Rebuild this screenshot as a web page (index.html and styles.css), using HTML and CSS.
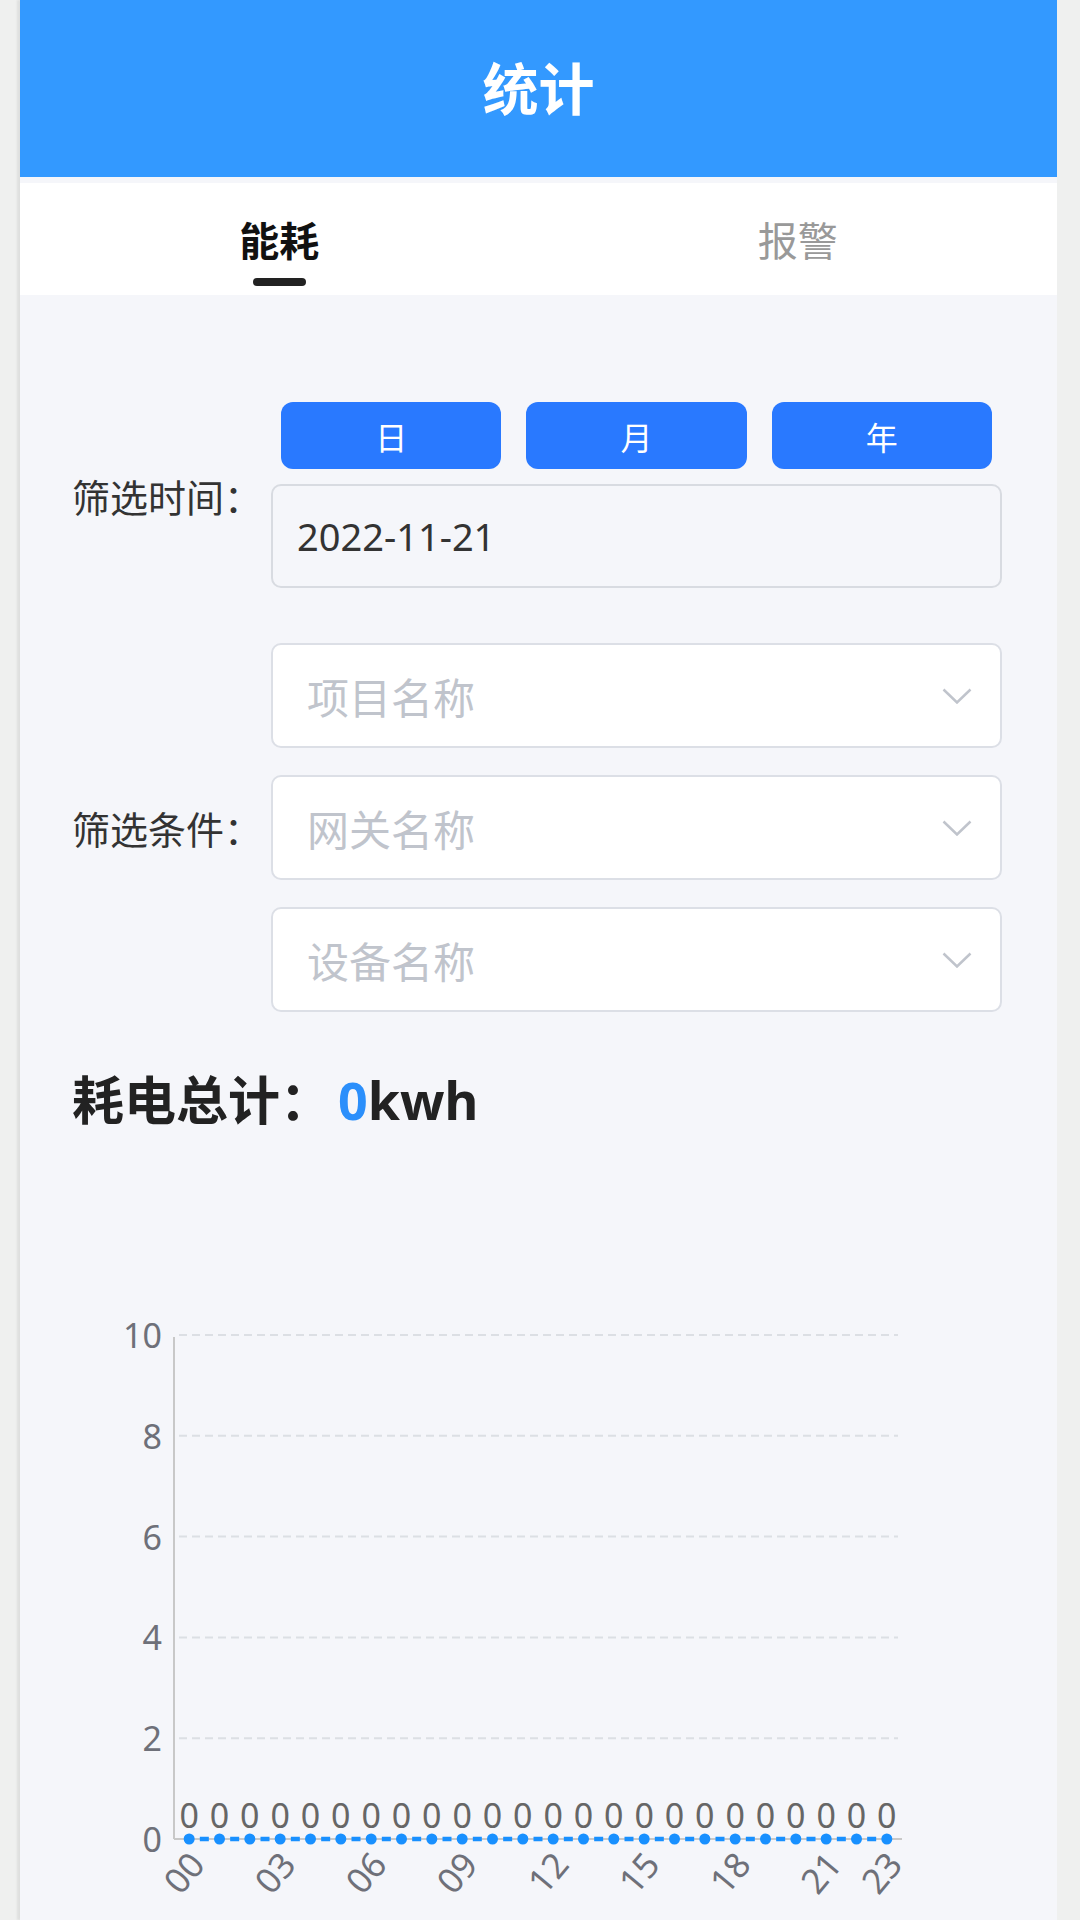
FILE: index.html
```html
<!DOCTYPE html>
<html lang="zh-CN">
<head>
    <meta charset="UTF-8">
    <meta name="viewport" content="width=device-width, initial-scale=1.0">
    <title>统计</title>
    <link rel="stylesheet" href="styles.css">
</head>
<body>
    <div class="app">
        <div class="header">统计</div>

        <div class="tabs">
            <div class="tab active">
                <span class="tab-text">能耗</span>
                <i class="tab-line"></i>
            </div>
            <div class="tab">
                <span class="tab-text">报警</span>
                <i class="tab-line"></i>
            </div>
        </div>

        <div class="main">
            <div class="form-row time-row">
                <div class="form-label">筛选时间：</div>
                <div class="form-body">
                    <div class="type-buttons">
                        <button class="type-btn">日</button>
                        <button class="type-btn">月</button>
                        <button class="type-btn">年</button>
                    </div>
                    <div class="date-input">2022-11-21</div>
                </div>
            </div>

            <div class="form-row filter-row">
                <div class="form-label">筛选条件：</div>
                <div class="form-body selects">
                    <div class="select">
                        <span class="placeholder">项目名称</span>
                        <svg class="arrow" width="30" height="16" viewBox="0 0 30 16"><path d="M1.5 1.5 L15 14.5 L28.5 1.5" fill="none" stroke="#c0c4cc" stroke-width="2.5"/></svg>
                    </div>
                    <div class="select">
                        <span class="placeholder">网关名称</span>
                        <svg class="arrow" width="30" height="16" viewBox="0 0 30 16"><path d="M1.5 1.5 L15 14.5 L28.5 1.5" fill="none" stroke="#c0c4cc" stroke-width="2.5"/></svg>
                    </div>
                    <div class="select">
                        <span class="placeholder">设备名称</span>
                        <svg class="arrow" width="30" height="16" viewBox="0 0 30 16"><path d="M1.5 1.5 L15 14.5 L28.5 1.5" fill="none" stroke="#c0c4cc" stroke-width="2.5"/></svg>
                    </div>
                </div>
            </div>

            <div class="total">耗电总计：<span class="total-num">0</span>kwh</div>

            <svg class="chart" id="chart" width="930" height="790" viewBox="0 0 930 790"></svg>
        </div>
    </div>

    <script src="script.js"></script>
</body>
</html>
```

FILE: styles.css
```css
* {
    box-sizing: border-box;
}

html, body {
    margin: 0;
    padding: 0;
    height: 100%;
    overflow: hidden;
    background-color: #eff0ef;
    font-family: "Noto Sans", "Noto Sans CJK SC", sans-serif;
}

.app {
    width: 1037px;
    min-height: 1920px;
    margin-left: 20px;
    background-color: #f5f6fa;
    box-shadow: -3px 0 2px rgba(0, 0, 0, 0.07);
}

.header {
    height: 177px;
    line-height: 177px;
    background-color: #3399ff;
    color: #fff;
    font-size: 56px;
    font-weight: bold;
    text-align: center;
}

.tabs {
    display: flex;
    margin-top: 6px;
    background-color: #fff;
}

.tab {
    flex: 1;
    display: flex;
    flex-direction: column;
    align-items: center;
    padding: 33px 0 9px;
}

.tab-text {
    font-size: 40px;
    line-height: 50px;
    color: #999;
}

.tab-line {
    width: 53px;
    height: 8px;
    margin-top: 12px;
    border-radius: 4px;
    visibility: hidden;
}

.tab.active .tab-text {
    color: #111;
    font-weight: bold;
}

.tab.active .tab-line {
    visibility: visible;
    background-color: #222;
}

.main {
    padding: 0 55px 0 52px;
}

.form-row {
    display: flex;
    align-items: center;
}

.time-row {
    margin-top: 107px;
}

.filter-row {
    margin-top: 55px;
}

.form-label {
    width: 199px;
    flex-shrink: 0;
    font-size: 38px;
    color: #333;
}

.form-body {
    flex: 1;
}

.type-buttons {
    display: flex;
    gap: 25px;
    padding: 0 10px;
}

.type-btn {
    flex: 1;
    height: 67px;
    border: none;
    border-radius: 12px;
    background-color: #2979ff;
    color: #fff;
    font-size: 32px;
    font-family: "Noto Sans", "Noto Sans CJK SC", sans-serif;
}

.date-input {
    height: 104px;
    margin-top: 15px;
    padding-left: 24px;
    display: flex;
    align-items: center;
    border: 2px solid #d8dbe1;
    border-radius: 10px;
    background-color: #f5f6fa;
    font-size: 38px;
    color: #333;
}

.selects {
    display: flex;
    flex-direction: column;
    gap: 27px;
}

.select {
    height: 105px;
    padding: 0 28px 0 34px;
    display: flex;
    align-items: center;
    justify-content: space-between;
    border: 2px solid #dcdfe6;
    border-radius: 10px;
    background-color: #fff;
}

.placeholder {
    font-size: 42px;
    color: #c0c4cc;
}

.total {
    margin-top: 58px;
    font-size: 52px;
    line-height: 60px;
    font-weight: bold;
    color: #222;
}

.total-num {
    margin-left: 6px;
    color: #2b8ffb;
}

.chart {
    display: block;
}

.chart text {
    font-family: "Noto Sans", sans-serif;
    font-size: 34px;
    fill: #6e7079;
}

.chart .value-label {
    fill: #666;
}

.chart .x-label {
    font-size: 35px;
}
```

FILE: script.js
```js
(function () {
    const svg = document.getElementById('chart');
    const NS = 'http://www.w3.org/2000/svg';

    const gridLeft = 102;
    const gridRight = 830;
    const gridTop = 205;
    const gridBottom = 709;

    const hours = [];
    for (let i = 0; i < 24; i++) {
        hours.push(String(i).padStart(2, '0'));
    }
    const values = hours.map(() => 0);
    const step = (gridRight - gridLeft) / hours.length;

    function el(name, attrs, text) {
        const node = document.createElementNS(NS, name);
        for (const key in attrs) {
            node.setAttribute(key, attrs[key]);
        }
        if (text !== undefined) node.textContent = text;
        svg.appendChild(node);
        return node;
    }

    function yOf(v) {
        return gridBottom - (v / 10) * (gridBottom - gridTop);
    }

    // grid lines and y labels
    for (let v = 0; v <= 10; v += 2) {
        const y = yOf(v);
        if (v > 0) {
            el('line', { x1: gridLeft + 5, y1: y, x2: gridRight - 4, y2: y, stroke: '#dcdfe4', 'stroke-width': 2, 'stroke-dasharray': '8 5' });
        }
        el('text', { x: gridLeft - 12, y: y, 'text-anchor': 'end', 'dominant-baseline': 'central' }, v);
    }

    // axes
    el('line', { x1: gridLeft, y1: gridTop + 2, x2: gridLeft, y2: gridBottom, stroke: '#c8c8c8', 'stroke-width': 2 });
    el('line', { x1: gridLeft, y1: gridBottom, x2: gridRight, y2: gridBottom, stroke: '#c8c8c8', 'stroke-width': 2 });

    // x labels
    hours.forEach((h, i) => {
        if (i % 3 !== 0 && i !== hours.length - 1) return;
        const x = gridLeft + step * (i + 0.5) + 7;
        const y = gridBottom + 18;
        el('text', { x: x, y: y, class: 'x-label', 'text-anchor': 'end', 'dominant-baseline': 'central', transform: `rotate(-50 ${x} ${y})` }, h);
    });

    // series
    const x0 = gridLeft + step / 2;
    const xN = gridLeft + step * (hours.length - 0.5);
    const dash = 9;
    el('line', {
        x1: x0, y1: yOf(0), x2: xN, y2: yOf(0),
        stroke: '#1890ff', 'stroke-width': 4.5,
        'stroke-dasharray': `${dash} ${step - dash}`,
        'stroke-dashoffset': step - (step - dash) / 2
    });

    values.forEach((v, i) => {
        const x = gridLeft + step * (i + 0.5);
        const y = yOf(v);
        el('circle', { cx: x, cy: y, r: 5.5, fill: '#1890ff' });
        el('text', { x: x, y: y - 11, 'text-anchor': 'middle', class: 'value-label' }, v);
    });
})();
```
